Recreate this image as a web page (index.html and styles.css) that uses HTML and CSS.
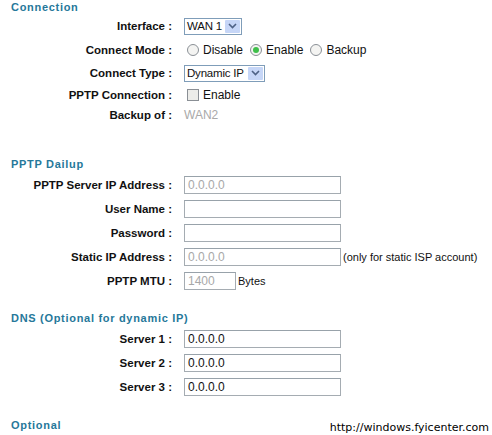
FILE: index.html
```html
<!DOCTYPE html>
<html lang="en">
<head>
  <meta charset="UTF-8">
  <title>WAN Connection</title>
  <link rel="stylesheet" href="styles.css">
</head>
<body>

<div class="page">

  <!-- Connection -->
  <h2 class="group-title">Connection</h2>
  <div class="rows conn">
    <div class="row r24">
      <span class="label">Interface :</span>
      <div class="field">
        <div class="select sel-wan">
          <span class="select-text">WAN 1</span>
          <span class="select-btn">
            <svg width="9" height="6" viewBox="0 0 9 6"><path d="M1 1 L4.5 4.5 L8 1" fill="none" stroke="#4d6185" stroke-width="1.6"/></svg>
          </span>
        </div>
      </div>
    </div>
    <div class="row r24">
      <span class="label">Connect Mode :</span>
      <div class="field">
        <span class="radio"></span><span class="opt">Disable</span>
        <span class="radio checked"></span><span class="opt">Enable</span>
        <span class="radio"></span><span class="opt">Backup</span>
      </div>
    </div>
    <div class="row r22">
      <span class="label">Connect Type :</span>
      <div class="field">
        <div class="select sel-type">
          <span class="select-text">Dynamic IP</span>
          <span class="select-btn">
            <svg width="9" height="6" viewBox="0 0 9 6"><path d="M1 1 L4.5 4.5 L8 1" fill="none" stroke="#4d6185" stroke-width="1.6"/></svg>
          </span>
        </div>
      </div>
    </div>
    <div class="row r22">
      <span class="label">PPTP Connection :</span>
      <div class="field">
        <span class="checkbox"></span><span class="opt">Enable</span>
      </div>
    </div>
    <div class="row r18">
      <span class="label">Backup of :</span>
      <div class="field"><span class="muted">WAN2</span></div>
    </div>
  </div>

  <!-- PPTP Dailup -->
  <h2 class="group-title pptp-title">PPTP Dailup</h2>
  <div class="rows">
    <div class="row r24">
      <span class="label">PPTP Server IP Address :</span>
      <div class="field"><span class="input disabled">0.0.0.0</span></div>
    </div>
    <div class="row r24">
      <span class="label">User Name :</span>
      <div class="field"><span class="input"></span></div>
    </div>
    <div class="row r24">
      <span class="label">Password :</span>
      <div class="field"><span class="input"></span></div>
    </div>
    <div class="row r24">
      <span class="label">Static IP Address :</span>
      <div class="field"><span class="input disabled">0.0.0.0</span><span class="note">(only for static ISP account)</span></div>
    </div>
    <div class="row r24">
      <span class="label">PPTP MTU :</span>
      <div class="field"><span class="input short disabled">1400</span><span class="note">Bytes</span></div>
    </div>
  </div>

  <!-- DNS -->
  <h2 class="group-title dns-title">DNS (Optional for dynamic IP)</h2>
  <div class="rows">
    <div class="row r24">
      <span class="label">Server 1 :</span>
      <div class="field"><span class="input">0.0.0.0</span></div>
    </div>
    <div class="row r24">
      <span class="label">Server 2 :</span>
      <div class="field"><span class="input">0.0.0.0</span></div>
    </div>
    <div class="row r24">
      <span class="label">Server 3 :</span>
      <div class="field"><span class="input">0.0.0.0</span></div>
    </div>
  </div>

  <h2 class="group-title opt-title">Optional</h2>

  <div class="watermark">http://windows.fyicenter.com</div>
</div>

</body>
</html>
```

FILE: styles.css
```css
body {
  margin: 0;
  padding: 0;
  background-color: #ffffff;
  font-family: "Liberation Sans", Arial, sans-serif;
  color: #111;
}
.page {
  position: relative;
  width: 492px;
  height: 435px;
  overflow: hidden;
}
.group-title {
  margin: 0;
  padding-left: 11px;
  height: 14px;
  line-height: 14px;
  font-size: 11px;
  font-weight: bold;
  letter-spacing: 0.7px;
  color: #26789a;
}
.pptp-title {
  margin-top: 33px;
}
.dns-title {
  margin-top: 18px;
}
.opt-title {
  margin-top: 19px;
}
.rows {
  margin-top: 2px;
}
.conn {
  margin-top: 0;
}
.row {
  display: grid;
  grid-template-columns: 172px 1fr;
  column-gap: 12px;
  align-items: center;
}
.r24 { height: 24px; }
.r22 { height: 22px; }
.r18 { height: 18px; }
.label {
  text-align: right;
  font-size: 11.5px;
  font-weight: bold;
  color: #111;
  white-space: nowrap;
}
.field {
  display: flex;
  align-items: center;
  font-size: 12px;
  white-space: nowrap;
}

/* select boxes */
.select {
  display: flex;
  align-items: center;
  box-sizing: border-box;
  height: 17px;
  border: 1px solid #7f9db9;
  background: #fff;
}
.sel-wan { width: 58px; }
.sel-type { width: 81px; }
.select-text {
  flex: 1;
  padding-left: 2px;
  font-size: 11.5px;
  line-height: 15px;
  letter-spacing: -0.2px;
}
.select-btn {
  display: flex;
  align-items: center;
  justify-content: center;
  width: 15px;
  height: 13px;
  margin-right: 1px;
  background: #c6d6f7;
  border-radius: 1px;
}

/* radios and checkbox */
.radio {
  box-sizing: border-box;
  width: 12px;
  height: 12px;
  border: 1px solid #8a9096;
  border-radius: 50%;
  background: #f4f4f2;
  margin-left: 3px;
  margin-right: 4px;
  position: relative;
}
.radio.checked::after {
  content: "";
  position: absolute;
  left: 2px;
  top: 2px;
  width: 6px;
  height: 6px;
  border-radius: 50%;
  background: #3fbf4a;
}
.opt {
  margin-right: 4px;
}
.checkbox {
  box-sizing: border-box;
  width: 12px;
  height: 12px;
  margin-left: 3px;
  margin-right: 4px;
  border: 1px solid #8a8f95;
  background: #ecece9;
}
.muted {
  color: #a9a9a9;
}

/* text inputs */
.input {
  display: block;
  box-sizing: border-box;
  width: 157px;
  height: 18px;
  border: 1px solid #a5acb2;
  border-top-color: #98a2aa;
  padding-left: 3px;
  font-size: 12px;
  line-height: 16px;
  color: #111;
  background: #fff;
}
.input.disabled {
  color: #a8a8a8;
}
.input.short {
  width: 52px;
}
.note {
  margin-left: 2px;
  font-size: 11px;
}

.watermark {
  position: absolute;
  right: 3px;
  bottom: 1px;
  font-family: "DejaVu Sans", Verdana, sans-serif;
  font-size: 11px;
  color: #000;
}
```
